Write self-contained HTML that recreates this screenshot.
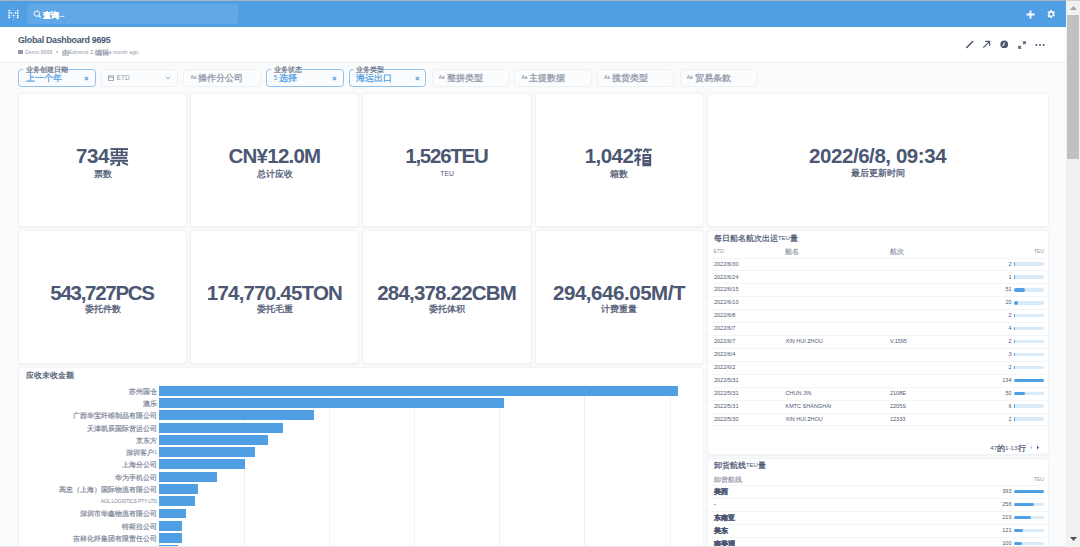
<!DOCTYPE html><html><head><meta charset="utf-8"><style>
*{box-sizing:border-box;margin:0;padding:0}
html,body{width:1080px;height:547px;overflow:hidden}
body{position:relative;background:#f9fbfc;font-family:"Liberation Sans",sans-serif;color:#4c5773}
div,svg{position:absolute}
.t{white-space:nowrap;line-height:1}
.cj{font-size:1.3333em;line-height:0;vertical-align:-0.1em;-webkit-text-stroke:0.03em}
.b .cj{-webkit-text-stroke:0.04em}
.card{background:#fff;border:1px solid #f2f3f5;border-radius:4px;box-shadow:0 0.5px 2px rgba(0,0,0,.05)}
</style></head><body>
<div style="left:0px;top:0px;width:1066px;height:1px;background:#a3b4c5;"></div>
<div style="left:0px;top:1px;width:1066px;height:26px;background:#509ee3;"></div>
<svg style="left:6px;top:5px" width="16" height="18" viewBox="6 5 16 18"><circle cx="9.1" cy="10.6" r="0.9" fill="#fff"/><circle cx="9.1" cy="12.9" r="0.9" fill="#fff"/><circle cx="9.1" cy="15.5" r="0.9" fill="#fff"/><circle cx="9.1" cy="17.5" r="0.9" fill="#fff"/><circle cx="11.3" cy="10.6" r="0.6" fill="#fff" opacity=".3"/><circle cx="11.3" cy="12.9" r="0.9" fill="#fff"/><circle cx="11.3" cy="15.5" r="0.6" fill="#fff" opacity=".3"/><circle cx="11.3" cy="17.5" r="0.6" fill="#fff" opacity=".3"/><circle cx="13.5" cy="8" r="0.6" fill="#fff" opacity=".3"/><circle cx="13.5" cy="10.6" r="0.6" fill="#fff" opacity=".3"/><circle cx="13.5" cy="12.9" r="0.6" fill="#fff" opacity=".3"/><circle cx="13.5" cy="15.5" r="0.9" fill="#fff"/><circle cx="13.5" cy="17.5" r="0.6" fill="#fff" opacity=".3"/><circle cx="13.5" cy="19.6" r="0.6" fill="#fff" opacity=".3"/><circle cx="15.5" cy="10.6" r="0.6" fill="#fff" opacity=".3"/><circle cx="15.5" cy="12.9" r="0.9" fill="#fff"/><circle cx="15.5" cy="15.5" r="0.6" fill="#fff" opacity=".3"/><circle cx="15.5" cy="17.5" r="0.6" fill="#fff" opacity=".3"/><circle cx="17.7" cy="10.6" r="0.9" fill="#fff"/><circle cx="17.7" cy="12.9" r="0.9" fill="#fff"/><circle cx="17.7" cy="15.5" r="0.9" fill="#fff"/><circle cx="17.7" cy="17.5" r="0.9" fill="#fff"/></svg>
<div style="left:27px;top:4px;width:211px;height:20px;background:rgba(255,255,255,.11);border-radius:4px;"></div>
<svg style="left:33px;top:10px" width="8" height="8" viewBox="0 0 8 8"><circle cx="3.9" cy="3.6" r="2.7" fill="none" stroke="#fff" stroke-width="1"/><path d="M5.8 5.6L7.6 7.5" stroke="#fff" stroke-width="1.1"/></svg>
<div class="t b" style="left:43.3px;top:11.97px;font-size:6.3px;color:#fff;font-weight:bold;"><span class="cj">查询</span>...</div>
<svg style="left:1026px;top:9.6px" width="9" height="9" viewBox="0 0 9 9"><path d="M4.5 .5V8.5M.5 4.5H8.5" stroke="#fff" stroke-width="1.8"/></svg>
<svg style="left:1046.6px;top:9.8px" width="8.4" height="8.4" viewBox="0 0 16 16"><path fill="#fff" fill-rule="evenodd" d="M6.5 0h3l.5 2.3 1.4.8 2.2-.8 1.5 2.6-1.7 1.6v1.6l1.7 1.6-1.5 2.6-2.2-.8-1.4.8L9.5 16h-3l-.5-2.3-1.4-.8-2.2.8L.9 11.1l1.7-1.6V6.5L.9 4.9 2.4 2.3l2.2.8L6 2.3zM8 5a3 3 0 100 6 3 3 0 000-6z"/></svg>
<div style="left:0px;top:27px;width:1066px;height:36px;background:#fff;border-bottom:1px solid #eef0f3;"></div>
<div class="t b" style="left:18px;top:35.97px;font-size:8.9px;color:#4c5773;font-weight:bold;letter-spacing:-0.3px;">Global Dashboard 9695</div>
<div style="left:18px;top:50px;width:4.8px;height:3.9px;background:#8e96a8;border-radius:.5px;"></div>
<div class="t" style="left:25px;top:50.41px;font-size:5.3px;color:#949aab;">Demo 9695</div>
<div style="left:56px;top:51.4px;width:1.6px;height:1.6px;background:#b8bdc9;border-radius:1px;"></div>
<div class="t" style="left:61.7px;top:50.41px;font-size:5.3px;color:#949aab;"><span class="cj">由</span>Edmond Z.<span class="cj">编辑</span>a month ago,</div>
<svg style="left:965px;top:40px" width="9" height="9" viewBox="0 0 9 9"><path d="M1.7 7.5L6.2 3M6.9 2.3L7.6 1.6" stroke="#4c5773" stroke-width="1.6" stroke-linecap="round"/></svg>
<svg style="left:982px;top:40px" width="9" height="9" viewBox="0 0 9 9"><path d="M1.3 7.7L7.4 1.6M3.2 1.4H7.6V5.8" stroke="#4c5773" stroke-width="1.2" fill="none"/></svg>
<svg style="left:1000px;top:40px" width="8.5" height="8.5" viewBox="0 0 9 9"><circle cx="4.5" cy="4.5" r="4.1" fill="#4c5773"/><path d="M4.3 2.7V5L2.9 6" stroke="#fff" stroke-width="1.1" fill="none" stroke-linecap="round"/></svg>
<svg style="left:1017.5px;top:40.5px" width="8" height="8" viewBox="0 0 8 8"><path d="M4.7.8H7.2V3.3M7.2.8L5 3M3.3 7.2H.8V4.7M.8 7.2L3 5" stroke="#4c5773" stroke-width="1.1" fill="none"/></svg>
<svg style="left:1034.5px;top:42.5px" width="10" height="4" viewBox="0 0 10 4"><circle cx="1.3" cy="2" r="1" fill="#4c5773"/><circle cx="5" cy="2" r="1" fill="#4c5773"/><circle cx="8.7" cy="2" r="1" fill="#4c5773"/></svg>
<div style="left:18.0px;top:69px;width:77.5px;height:18px;border:1px solid #8fc1ec;border-radius:3.5px;"></div>
<div style="left:22.9px;top:68px;width:37.4px;height:2px;background:#f9fbfc;"></div>
<div class="t" style="left:25.6px;top:66.83px;font-size:5.4px;color:#6b7489;"><span class="cj">业务创建日期</span></div>
<div class="t" style="left:25.6px;top:75.0px;font-size:6.5px;color:#509ee3;"><span class="cj">上一个年</span></div>
<svg style="left:84.0px;top:75.5px" width="5" height="5" viewBox="0 0 5 5"><path d="M.8.8L4.2 4.2M4.2.8L.8 4.2" stroke="#509ee3" stroke-width="1.1"/></svg>
<div style="left:100.7px;top:69px;width:77.5px;height:18px;border:1px solid #eef0f2;border-radius:3.5px;background:#fbfcfd;"></div>
<svg style="left:107.7px;top:74.5px" width="6" height="6" viewBox="0 0 6 6"><rect x=".5" y=".9" width="5" height="4.6" fill="none" stroke="#8e96a8" stroke-width=".8"/><path d="M.5 2.2H5.5" stroke="#8e96a8" stroke-width=".8"/></svg>
<div class="t" style="left:116.7px;top:74.8px;font-size:6.5px;color:#8e96a8;">ETD</div>
<svg style="left:164.7px;top:76px" width="6" height="4" viewBox="0 0 6 4"><path d="M.8.8L3 3 5.2.8" stroke="#8e96a8" stroke-width=".9" fill="none"/></svg>
<div style="left:183.4px;top:69px;width:77.5px;height:18px;border:1px solid #eef0f2;border-radius:3.5px;background:#fbfcfd;"></div>
<div class="t b" style="left:190.6px;top:76.49px;font-size:4.5px;color:#8e96a8;font-weight:bold;">Aa</div>
<div class="t" style="left:198.4px;top:75.0px;font-size:6.5px;color:#8e96a8;"><span class="cj">操作分公司</span></div>
<div style="left:266.1px;top:69px;width:77.5px;height:18px;border:1px solid #8fc1ec;border-radius:3.5px;"></div>
<div style="left:271.0px;top:68px;width:26.6px;height:2px;background:#f9fbfc;"></div>
<div class="t" style="left:273.7px;top:66.83px;font-size:5.4px;color:#6b7489;"><span class="cj">业务状态</span></div>
<div class="t" style="left:273.7px;top:75.0px;font-size:6.5px;color:#509ee3;">5 <span class="cj">选择</span></div>
<svg style="left:332.1px;top:75.5px" width="5" height="5" viewBox="0 0 5 5"><path d="M.8.8L4.2 4.2M4.2.8L.8 4.2" stroke="#509ee3" stroke-width="1.1"/></svg>
<div style="left:348.8px;top:69px;width:77.5px;height:18px;border:1px solid #8fc1ec;border-radius:3.5px;"></div>
<div style="left:353.7px;top:68px;width:26.6px;height:2px;background:#f9fbfc;"></div>
<div class="t" style="left:356.4px;top:66.83px;font-size:5.4px;color:#6b7489;"><span class="cj">业务类型</span></div>
<div class="t" style="left:356.4px;top:75.0px;font-size:6.5px;color:#509ee3;"><span class="cj">海运出口</span></div>
<svg style="left:414.8px;top:75.5px" width="5" height="5" viewBox="0 0 5 5"><path d="M.8.8L4.2 4.2M4.2.8L.8 4.2" stroke="#509ee3" stroke-width="1.1"/></svg>
<div style="left:431.5px;top:69px;width:77.5px;height:18px;border:1px solid #eef0f2;border-radius:3.5px;background:#fbfcfd;"></div>
<div class="t b" style="left:438.7px;top:76.49px;font-size:4.5px;color:#8e96a8;font-weight:bold;">Aa</div>
<div class="t" style="left:446.5px;top:75.0px;font-size:6.5px;color:#8e96a8;"><span class="cj">整拼类型</span></div>
<div style="left:514.2px;top:69px;width:77.5px;height:18px;border:1px solid #eef0f2;border-radius:3.5px;background:#fbfcfd;"></div>
<div class="t b" style="left:521.4px;top:76.49px;font-size:4.5px;color:#8e96a8;font-weight:bold;">Aa</div>
<div class="t" style="left:529.2px;top:75.0px;font-size:6.5px;color:#8e96a8;"><span class="cj">主提数据</span></div>
<div style="left:596.9px;top:69px;width:77.5px;height:18px;border:1px solid #eef0f2;border-radius:3.5px;background:#fbfcfd;"></div>
<div class="t b" style="left:604.1px;top:76.49px;font-size:4.5px;color:#8e96a8;font-weight:bold;">Aa</div>
<div class="t" style="left:611.9px;top:75.0px;font-size:6.5px;color:#8e96a8;"><span class="cj">揽货类型</span></div>
<div style="left:679.6px;top:69px;width:77.5px;height:18px;border:1px solid #eef0f2;border-radius:3.5px;background:#fbfcfd;"></div>
<div class="t b" style="left:686.8px;top:76.49px;font-size:4.5px;color:#8e96a8;font-weight:bold;">Aa</div>
<div class="t" style="left:694.6px;top:75.0px;font-size:6.5px;color:#8e96a8;"><span class="cj">贸易条款</span></div>
<div class="card" style="left:18.0px;top:93.3px;width:169.3px;height:134.2px;"></div>
<div class="t b" style="left:-97.35px;top:146.25px;width:400px;font-size:20.5px;color:#4c5773;font-weight:bold;letter-spacing:-0.4px;text-align:center;text-indent:-0.4px;">734<span class="gl" style="display:inline-block;position:relative;width:20px;height:20px;vertical-align:-3.4px;letter-spacing:0"><svg style="left:0;top:0" width="20" height="20" viewBox="0 0 20 20" fill="#4c5773"><rect x="1.46" y="1.1" width="17.5" height="1.9"/><rect x="7.1" y="1.28" width="1.9" height="4"/><rect x="11.9" y="1.28" width="1.8" height="4"/><path fill-rule="evenodd" d="M1.8 4.6H18.5V9.2H1.8Z M4 5.9H7V7.8H4Z M9 5.9H11.7V7.8H9Z M13.9 5.9H16.5V7.8H13.9Z"/><rect x="2.4" y="10" width="15.5" height="1.9"/><rect x="1.1" y="12.7" width="17.9" height="2.1"/><rect x="8.9" y="14.6" width="2.2" height="4.4"/><path d="M9.2 18.6L7.6 17.8M5.5 15.4L1.5 17.9M13.2 15.4L19 17.9" stroke="#4c5773" stroke-width="2" fill="none"/></svg></span></div>
<div class="t" style="left:-97.35px;top:170.54px;width:400px;font-size:6.8px;color:#4c5773;text-align:center;"><span class="cj">票数</span></div>
<div class="card" style="left:190.2px;top:93.3px;width:169.3px;height:134.2px;"></div>
<div class="t b" style="left:74.85px;top:146.25px;width:400px;font-size:20.5px;color:#4c5773;font-weight:bold;letter-spacing:-0.77px;text-align:center;text-indent:-0.77px;">CN¥12.0M</div>
<div class="t" style="left:74.85px;top:170.54px;width:400px;font-size:6.8px;color:#4c5773;text-align:center;"><span class="cj">总计应收</span></div>
<div class="card" style="left:362.4px;top:93.3px;width:169.3px;height:134.2px;"></div>
<div class="t b" style="left:247.05px;top:146.25px;width:400px;font-size:20.5px;color:#4c5773;font-weight:bold;letter-spacing:-1.26px;text-align:center;text-indent:-1.26px;">1,526TEU</div>
<div class="t" style="left:247.05px;top:170.54px;width:400px;font-size:6.8px;color:#4c5773;text-align:center;">TEU</div>
<div class="card" style="left:534.6px;top:93.3px;width:169.3px;height:134.2px;"></div>
<div class="t b" style="left:419.25px;top:146.25px;width:400px;font-size:20.5px;color:#4c5773;font-weight:bold;letter-spacing:-0.56px;text-align:center;text-indent:-0.56px;">1,042<span class="gl" style="display:inline-block;position:relative;width:20px;height:21px;vertical-align:-3.6px;letter-spacing:0"><svg style="left:0;top:0" width="20" height="21" viewBox="0 0 20 21" fill="none" stroke="#4c5773" stroke-width="2"><path d="M4.6 2.5L1.5 6.1M3.5 3.8H9.2M5 5L6.5 6.3M13 2.5L10.4 6.3M12.3 3.8H18.8M13.8 5L15.4 6.7"/><path d="M1.5 9.6H7.7M5.2 7.5V20M5 11.1L1.5 15.7M5.8 12.7L7.7 14.2"/><path d="M10.4 8.9H17.2V19.2H10.4Z M10.4 11.9H17.2M10.4 14.9H17.2M10.4 17.4H17.2"/></svg></span></div>
<div class="t" style="left:419.25px;top:170.54px;width:400px;font-size:6.8px;color:#4c5773;text-align:center;"><span class="cj">箱数</span></div>
<div class="card" style="left:18.0px;top:229.8px;width:169.3px;height:134.2px;"></div>
<div class="t b" style="left:-97.35px;top:282.75px;width:400px;font-size:20.5px;color:#4c5773;font-weight:bold;letter-spacing:-1.29px;text-align:center;text-indent:-1.29px;">543,727PCS</div>
<div class="t" style="left:-97.35px;top:305.74px;width:400px;font-size:6.8px;color:#4c5773;text-align:center;"><span class="cj">委托件数</span></div>
<div class="card" style="left:190.2px;top:229.8px;width:169.3px;height:134.2px;"></div>
<div class="t b" style="left:74.85px;top:282.75px;width:400px;font-size:20.5px;color:#4c5773;font-weight:bold;letter-spacing:-0.78px;text-align:center;text-indent:-0.78px;">174,770.45TON</div>
<div class="t" style="left:74.85px;top:305.74px;width:400px;font-size:6.8px;color:#4c5773;text-align:center;"><span class="cj">委托毛重</span></div>
<div class="card" style="left:362.4px;top:229.8px;width:169.3px;height:134.2px;"></div>
<div class="t b" style="left:247.05px;top:282.75px;width:400px;font-size:20.5px;color:#4c5773;font-weight:bold;letter-spacing:-0.81px;text-align:center;text-indent:-0.81px;">284,378.22CBM</div>
<div class="t" style="left:247.05px;top:305.74px;width:400px;font-size:6.8px;color:#4c5773;text-align:center;"><span class="cj">委托体积</span></div>
<div class="card" style="left:534.6px;top:229.8px;width:169.3px;height:134.2px;"></div>
<div class="t b" style="left:419.25px;top:282.75px;width:400px;font-size:20.5px;color:#4c5773;font-weight:bold;letter-spacing:-0.45px;text-align:center;text-indent:-0.45px;">294,646.05M/T</div>
<div class="t" style="left:419.25px;top:305.74px;width:400px;font-size:6.8px;color:#4c5773;text-align:center;"><span class="cj">计费重量</span></div>
<div class="card" style="left:706.8px;top:93.3px;width:342px;height:134.2px;"></div>
<div class="t b" style="left:677.8px;top:146.25px;width:400px;font-size:20.5px;color:#4c5773;font-weight:bold;letter-spacing:-0.43px;text-align:center;text-indent:-0.43px;">2022/6/8, 09:34</div>
<div class="t" style="left:677.8px;top:169.54px;width:400px;font-size:6.8px;color:#4c5773;text-align:center;"><span class="cj">最后更新时间</span></div>
<div class="card" style="left:18px;top:366.7px;width:685.5px;height:200px;"></div>
<div class="t" style="left:25.6px;top:371.92px;font-size:6px;color:#4c5773;"><span class="cj">应收未收金额</span></div>
<div style="left:159px;top:384px;width:1px;height:170px;background:#eef0f2;"></div>
<div style="left:243.6px;top:384px;width:1px;height:170px;background:#eef0f2;"></div>
<div style="left:329.2px;top:384px;width:1px;height:170px;background:#eef0f2;"></div>
<div style="left:414.3px;top:384px;width:1px;height:170px;background:#eef0f2;"></div>
<div style="left:499.3px;top:384px;width:1px;height:170px;background:#eef0f2;"></div>
<div style="left:584.3px;top:384px;width:1px;height:170px;background:#eef0f2;"></div>
<div style="left:669.6px;top:384px;width:1px;height:170px;background:#eef0f2;"></div>
<div style="left:159px;top:385.8px;width:519.1px;height:9.9px;background:#509ee3;"></div>
<div class="t" style="left:7px;top:388.73px;width:150px;font-size:5.05px;color:#7f889b;text-align:right;"><span class="cj">苏州国仓</span></div>
<div style="left:159px;top:398.07px;width:345.4px;height:9.9px;background:#509ee3;"></div>
<div class="t" style="left:7px;top:401.0px;width:150px;font-size:5.05px;color:#7f889b;text-align:right;"><span class="cj">澳乐</span></div>
<div style="left:159px;top:410.34px;width:154.8px;height:9.9px;background:#509ee3;"></div>
<div class="t" style="left:7px;top:413.27px;width:150px;font-size:5.05px;color:#7f889b;text-align:right;"><span class="cj">广西华宝纤维制品有限公司</span></div>
<div style="left:159px;top:422.61px;width:123.7px;height:9.9px;background:#509ee3;"></div>
<div class="t" style="left:7px;top:425.54px;width:150px;font-size:5.05px;color:#7f889b;text-align:right;"><span class="cj">天津凯辰国际货运公司</span></div>
<div style="left:159px;top:434.88px;width:109px;height:9.9px;background:#509ee3;"></div>
<div class="t" style="left:7px;top:437.81px;width:150px;font-size:5.05px;color:#7f889b;text-align:right;"><span class="cj">京东方</span></div>
<div style="left:159px;top:447.15px;width:95.7px;height:9.9px;background:#509ee3;"></div>
<div class="t" style="left:7px;top:450.08px;width:150px;font-size:5.05px;color:#7f889b;text-align:right;"><span class="cj">深圳客户</span>1</div>
<div style="left:159px;top:459.42px;width:86.1px;height:9.9px;background:#509ee3;"></div>
<div class="t" style="left:7px;top:462.35px;width:150px;font-size:5.05px;color:#7f889b;text-align:right;"><span class="cj">上海分公司</span></div>
<div style="left:159px;top:471.69px;width:58.4px;height:9.9px;background:#509ee3;"></div>
<div class="t" style="left:7px;top:474.62px;width:150px;font-size:5.05px;color:#7f889b;text-align:right;"><span class="cj">华为手机公司</span></div>
<div style="left:159px;top:483.96px;width:38.6px;height:9.9px;background:#509ee3;"></div>
<div class="t" style="left:7px;top:486.89px;width:150px;font-size:5.05px;color:#7f889b;text-align:right;"><span class="cj">高忠（上海）国际物流有限公司</span></div>
<div style="left:159px;top:496.23px;width:36.2px;height:9.9px;background:#509ee3;"></div>
<div class="t" style="left:7px;top:499.16px;width:150px;font-size:5.05px;color:#7f889b;letter-spacing:-0.18px;text-align:right;margin-right:-0.18px;">AGL LOGISTICS PTY LTD</div>
<div style="left:159px;top:508.5px;width:26.6px;height:9.9px;background:#509ee3;"></div>
<div class="t" style="left:7px;top:511.43px;width:150px;font-size:5.05px;color:#7f889b;text-align:right;"><span class="cj">深圳市华鑫物流有限公司</span></div>
<div style="left:159px;top:520.77px;width:22.9px;height:9.9px;background:#509ee3;"></div>
<div class="t" style="left:7px;top:523.7px;width:150px;font-size:5.05px;color:#7f889b;text-align:right;"><span class="cj">特斯拉公司</span></div>
<div style="left:159px;top:533.04px;width:22.5px;height:9.9px;background:#509ee3;"></div>
<div class="t" style="left:7px;top:535.97px;width:150px;font-size:5.05px;color:#7f889b;text-align:right;"><span class="cj">吉林化纤集团有限责任公司</span></div>
<div style="left:159px;top:545.31px;width:19px;height:9.9px;background:#509ee3;"></div>
<div class="t" style="left:7px;top:548.24px;width:150px;font-size:5.05px;color:#7f889b;text-align:right;"><span class="cj">某某公司</span></div>
<div class="card" style="left:706.9px;top:229.8px;width:341.8px;height:225.4px;"></div>
<div class="t" style="left:714px;top:235.61px;font-size:5.9px;color:#4c5773;"><span class="cj">每日船名航次出运</span>TEU<span class="cj">量</span></div>
<div class="t" style="left:713.5px;top:248.6px;font-size:5.2px;color:#949aab;">ETD</div>
<div class="t" style="left:785px;top:248.6px;font-size:5.2px;color:#949aab;"><span class="cj">船名</span></div>
<div class="t" style="left:889.5px;top:248.6px;font-size:5.2px;color:#949aab;"><span class="cj">航次</span></div>
<div class="t" style="left:984px;top:248.6px;width:60px;font-size:5.2px;color:#949aab;text-align:right;">TEU</div>
<div style="left:707.9px;top:257.5px;width:339.8px;height:1px;background:#f3f5f7;"></div>
<div class="t" style="left:714px;top:261.64px;font-size:5.5px;color:#4c5773;">2022/6/30</div>
<div class="t" style="left:961.5px;top:261.64px;width:50px;font-size:5.5px;color:#4c5773;text-align:right;">2</div>
<div style="left:1014px;top:262.3px;width:30px;height:3.5px;background:#d9eaf8;border-radius:2px;"></div>
<div style="left:1014px;top:262.3px;width:1.0px;height:3.5px;background:#509ee3;border-radius:2px;"></div>
<div style="left:707.9px;top:270.42px;width:339.8px;height:1px;background:#f3f5f7;"></div>
<div class="t" style="left:714px;top:274.56px;font-size:5.5px;color:#4c5773;">2022/6/24</div>
<div class="t" style="left:961.5px;top:274.56px;width:50px;font-size:5.5px;color:#4c5773;text-align:right;">1</div>
<div style="left:1014px;top:275.22px;width:30px;height:3.5px;background:#d9eaf8;border-radius:2px;"></div>
<div style="left:1014px;top:275.22px;width:1.0px;height:3.5px;background:#509ee3;border-radius:2px;"></div>
<div style="left:707.9px;top:283.34px;width:339.8px;height:1px;background:#f3f5f7;"></div>
<div class="t" style="left:714px;top:287.48px;font-size:5.5px;color:#4c5773;">2022/6/15</div>
<div class="t" style="left:961.5px;top:287.48px;width:50px;font-size:5.5px;color:#4c5773;text-align:right;">51</div>
<div style="left:1014px;top:288.14px;width:30px;height:3.5px;background:#d9eaf8;border-radius:2px;"></div>
<div style="left:1014px;top:288.14px;width:11.42px;height:3.5px;background:#509ee3;border-radius:2px;"></div>
<div style="left:707.9px;top:296.26px;width:339.8px;height:1px;background:#f3f5f7;"></div>
<div class="t" style="left:714px;top:300.4px;font-size:5.5px;color:#4c5773;">2022/6/10</div>
<div class="t" style="left:961.5px;top:300.4px;width:50px;font-size:5.5px;color:#4c5773;text-align:right;">20</div>
<div style="left:1014px;top:301.06px;width:30px;height:3.5px;background:#d9eaf8;border-radius:2px;"></div>
<div style="left:1014px;top:301.06px;width:4.48px;height:3.5px;background:#509ee3;border-radius:2px;"></div>
<div style="left:707.9px;top:309.18px;width:339.8px;height:1px;background:#f3f5f7;"></div>
<div class="t" style="left:714px;top:313.32px;font-size:5.5px;color:#4c5773;">2022/6/8</div>
<div class="t" style="left:961.5px;top:313.32px;width:50px;font-size:5.5px;color:#4c5773;text-align:right;">2</div>
<div style="left:1014px;top:313.98px;width:30px;height:3.5px;background:#d9eaf8;border-radius:2px;"></div>
<div style="left:1014px;top:313.98px;width:1.0px;height:3.5px;background:#509ee3;border-radius:2px;"></div>
<div style="left:707.9px;top:322.1px;width:339.8px;height:1px;background:#f3f5f7;"></div>
<div class="t" style="left:714px;top:326.24px;font-size:5.5px;color:#4c5773;">2022/6/7</div>
<div class="t" style="left:961.5px;top:326.24px;width:50px;font-size:5.5px;color:#4c5773;text-align:right;">4</div>
<div style="left:1014px;top:326.9px;width:30px;height:3.5px;background:#d9eaf8;border-radius:2px;"></div>
<div style="left:1014px;top:326.9px;width:1.0px;height:3.5px;background:#509ee3;border-radius:2px;"></div>
<div style="left:707.9px;top:335.02px;width:339.8px;height:1px;background:#f3f5f7;"></div>
<div class="t" style="left:714px;top:339.16px;font-size:5.5px;color:#4c5773;">2022/6/7</div>
<div class="t" style="left:785.5px;top:339.16px;font-size:5.5px;color:#4c5773;">XIN HUI ZHOU</div>
<div class="t" style="left:890px;top:339.16px;font-size:5.5px;color:#4c5773;">V.1595</div>
<div class="t" style="left:961.5px;top:339.16px;width:50px;font-size:5.5px;color:#4c5773;text-align:right;">2</div>
<div style="left:1014px;top:339.82px;width:30px;height:3.5px;background:#d9eaf8;border-radius:2px;"></div>
<div style="left:1014px;top:339.82px;width:1.0px;height:3.5px;background:#509ee3;border-radius:2px;"></div>
<div style="left:707.9px;top:347.94px;width:339.8px;height:1px;background:#f3f5f7;"></div>
<div class="t" style="left:714px;top:352.08px;font-size:5.5px;color:#4c5773;">2022/6/4</div>
<div class="t" style="left:961.5px;top:352.08px;width:50px;font-size:5.5px;color:#4c5773;text-align:right;">3</div>
<div style="left:1014px;top:352.74px;width:30px;height:3.5px;background:#d9eaf8;border-radius:2px;"></div>
<div style="left:1014px;top:352.74px;width:1.0px;height:3.5px;background:#509ee3;border-radius:2px;"></div>
<div style="left:707.9px;top:360.86px;width:339.8px;height:1px;background:#f3f5f7;"></div>
<div class="t" style="left:714px;top:365.0px;font-size:5.5px;color:#4c5773;">2022/6/2</div>
<div class="t" style="left:961.5px;top:365.0px;width:50px;font-size:5.5px;color:#4c5773;text-align:right;">2</div>
<div style="left:1014px;top:365.66px;width:30px;height:3.5px;background:#d9eaf8;border-radius:2px;"></div>
<div style="left:1014px;top:365.66px;width:1.0px;height:3.5px;background:#509ee3;border-radius:2px;"></div>
<div style="left:707.9px;top:373.78px;width:339.8px;height:1px;background:#f3f5f7;"></div>
<div class="t" style="left:714px;top:377.92px;font-size:5.5px;color:#4c5773;">2022/5/31</div>
<div class="t" style="left:961.5px;top:377.92px;width:50px;font-size:5.5px;color:#4c5773;text-align:right;">134</div>
<div style="left:1014px;top:378.58px;width:30px;height:3.5px;background:#d9eaf8;border-radius:2px;"></div>
<div style="left:1014px;top:378.58px;width:30.0px;height:3.5px;background:#509ee3;border-radius:2px;"></div>
<div style="left:707.9px;top:386.7px;width:339.8px;height:1px;background:#f3f5f7;"></div>
<div class="t" style="left:714px;top:390.84px;font-size:5.5px;color:#4c5773;">2022/5/31</div>
<div class="t" style="left:785.5px;top:390.84px;font-size:5.5px;color:#4c5773;">CHUN JIN</div>
<div class="t" style="left:890px;top:390.84px;font-size:5.5px;color:#4c5773;">2108E</div>
<div class="t" style="left:961.5px;top:390.84px;width:50px;font-size:5.5px;color:#4c5773;text-align:right;">50</div>
<div style="left:1014px;top:391.5px;width:30px;height:3.5px;background:#d9eaf8;border-radius:2px;"></div>
<div style="left:1014px;top:391.5px;width:11.19px;height:3.5px;background:#509ee3;border-radius:2px;"></div>
<div style="left:707.9px;top:399.62px;width:339.8px;height:1px;background:#f3f5f7;"></div>
<div class="t" style="left:714px;top:403.76px;font-size:5.5px;color:#4c5773;">2022/5/31</div>
<div class="t" style="left:785.5px;top:403.76px;font-size:5.5px;color:#4c5773;">KMTC SHANGHAI</div>
<div class="t" style="left:890px;top:403.76px;font-size:5.5px;color:#4c5773;">2205S</div>
<div class="t" style="left:961.5px;top:403.76px;width:50px;font-size:5.5px;color:#4c5773;text-align:right;">6</div>
<div style="left:1014px;top:404.42px;width:30px;height:3.5px;background:#d9eaf8;border-radius:2px;"></div>
<div style="left:1014px;top:404.42px;width:1.34px;height:3.5px;background:#509ee3;border-radius:2px;"></div>
<div style="left:707.9px;top:412.54px;width:339.8px;height:1px;background:#f3f5f7;"></div>
<div class="t" style="left:714px;top:416.68px;font-size:5.5px;color:#4c5773;">2022/5/30</div>
<div class="t" style="left:785.5px;top:416.68px;font-size:5.5px;color:#4c5773;">XIN HUI ZHOU</div>
<div class="t" style="left:890px;top:416.68px;font-size:5.5px;color:#4c5773;">12333</div>
<div class="t" style="left:961.5px;top:416.68px;width:50px;font-size:5.5px;color:#4c5773;text-align:right;">2</div>
<div style="left:1014px;top:417.34px;width:30px;height:3.5px;background:#d9eaf8;border-radius:2px;"></div>
<div style="left:1014px;top:417.34px;width:1.0px;height:3.5px;background:#509ee3;border-radius:2px;"></div>
<div style="left:707.9px;top:425.46px;width:339.8px;height:1px;background:#f3f5f7;"></div>
<div class="t" style="left:945.5px;top:444.75px;width:80px;font-size:6.2px;color:#4c5773;text-align:right;">47<span class="cj">的</span>1-13<span class="cj">行</span></div>
<svg style="left:1028.7px;top:444.6px" width="4" height="5" viewBox="0 0 4 5"><path d="M3 .5L1 2.5 3 4.5" fill="#c5cad3"/></svg>
<svg style="left:1036.3px;top:444.6px" width="4" height="5" viewBox="0 0 4 5"><path d="M1 .5L3 2.5 1 4.5z" fill="#4c5773"/></svg>
<div class="card" style="left:706.9px;top:458px;width:341.8px;height:120px;"></div>
<div class="t" style="left:714px;top:463.31px;font-size:5.9px;color:#4c5773;"><span class="cj">卸货航线</span>TEU<span class="cj">量</span></div>
<div class="t" style="left:714px;top:476.6px;font-size:5.2px;color:#949aab;"><span class="cj">卸货航线</span></div>
<div class="t" style="left:984px;top:476.6px;width:60px;font-size:5.2px;color:#949aab;text-align:right;">TEU</div>
<div style="left:707.9px;top:485.0px;width:339.8px;height:1px;background:#f3f5f7;"></div>
<div class="t b" style="left:714px;top:489.14px;font-size:5.5px;color:#4c5773;font-weight:bold;"><span class="cj">美西</span></div>
<div class="t" style="left:961.5px;top:489.14px;width:50px;font-size:5.5px;color:#4c5773;text-align:right;">393</div>
<div style="left:1014px;top:489.8px;width:30px;height:3.5px;background:#d9eaf8;border-radius:2px;"></div>
<div style="left:1014px;top:489.8px;width:30.0px;height:3.5px;background:#509ee3;border-radius:2px;"></div>
<div style="left:707.9px;top:497.95px;width:339.8px;height:1px;background:#f3f5f7;"></div>
<div class="t b" style="left:714px;top:502.09px;font-size:5.5px;color:#4c5773;font-weight:bold;">-</div>
<div class="t" style="left:961.5px;top:502.09px;width:50px;font-size:5.5px;color:#4c5773;text-align:right;">256</div>
<div style="left:1014px;top:502.75px;width:30px;height:3.5px;background:#d9eaf8;border-radius:2px;"></div>
<div style="left:1014px;top:502.75px;width:19.54px;height:3.5px;background:#509ee3;border-radius:2px;"></div>
<div style="left:707.9px;top:510.9px;width:339.8px;height:1px;background:#f3f5f7;"></div>
<div class="t b" style="left:714px;top:515.04px;font-size:5.5px;color:#4c5773;font-weight:bold;"><span class="cj">东南亚</span></div>
<div class="t" style="left:961.5px;top:515.04px;width:50px;font-size:5.5px;color:#4c5773;text-align:right;">219</div>
<div style="left:1014px;top:515.7px;width:30px;height:3.5px;background:#d9eaf8;border-radius:2px;"></div>
<div style="left:1014px;top:515.7px;width:16.72px;height:3.5px;background:#509ee3;border-radius:2px;"></div>
<div style="left:707.9px;top:523.85px;width:339.8px;height:1px;background:#f3f5f7;"></div>
<div class="t b" style="left:714px;top:527.99px;font-size:5.5px;color:#4c5773;font-weight:bold;"><span class="cj">美东</span></div>
<div class="t" style="left:961.5px;top:527.99px;width:50px;font-size:5.5px;color:#4c5773;text-align:right;">121</div>
<div style="left:1014px;top:528.65px;width:30px;height:3.5px;background:#d9eaf8;border-radius:2px;"></div>
<div style="left:1014px;top:528.65px;width:9.24px;height:3.5px;background:#509ee3;border-radius:2px;"></div>
<div style="left:707.9px;top:536.8px;width:339.8px;height:1px;background:#f3f5f7;"></div>
<div class="t b" style="left:714px;top:540.94px;font-size:5.5px;color:#4c5773;font-weight:bold;"><span class="cj">南美洲</span></div>
<div class="t" style="left:961.5px;top:540.94px;width:50px;font-size:5.5px;color:#4c5773;text-align:right;">100</div>
<div style="left:1014px;top:541.6px;width:30px;height:3.5px;background:#d9eaf8;border-radius:2px;"></div>
<div style="left:1014px;top:541.6px;width:7.63px;height:3.5px;background:#509ee3;border-radius:2px;"></div>
<div style="left:0px;top:546px;width:1066px;height:1px;background:#e6e6e6;"></div>
<div style="left:1066px;top:0px;width:14px;height:547px;background:#f1f1f1;"></div>
<div style="left:1066px;top:0px;width:14px;height:1px;background:#d2d2d2;"></div>
<div style="left:1067px;top:14.5px;width:12px;height:144px;background:#c1c1c1;"></div>
<svg style="left:1069.5px;top:6px" width="7" height="4" viewBox="0 0 7 4"><path d="M3.5 0L7 4H0z" fill="#a3a3a3"/></svg>
<svg style="left:1069.5px;top:537px" width="7" height="4" viewBox="0 0 7 4"><path d="M0 0H7L3.5 4z" fill="#505050"/></svg>
</body></html>
